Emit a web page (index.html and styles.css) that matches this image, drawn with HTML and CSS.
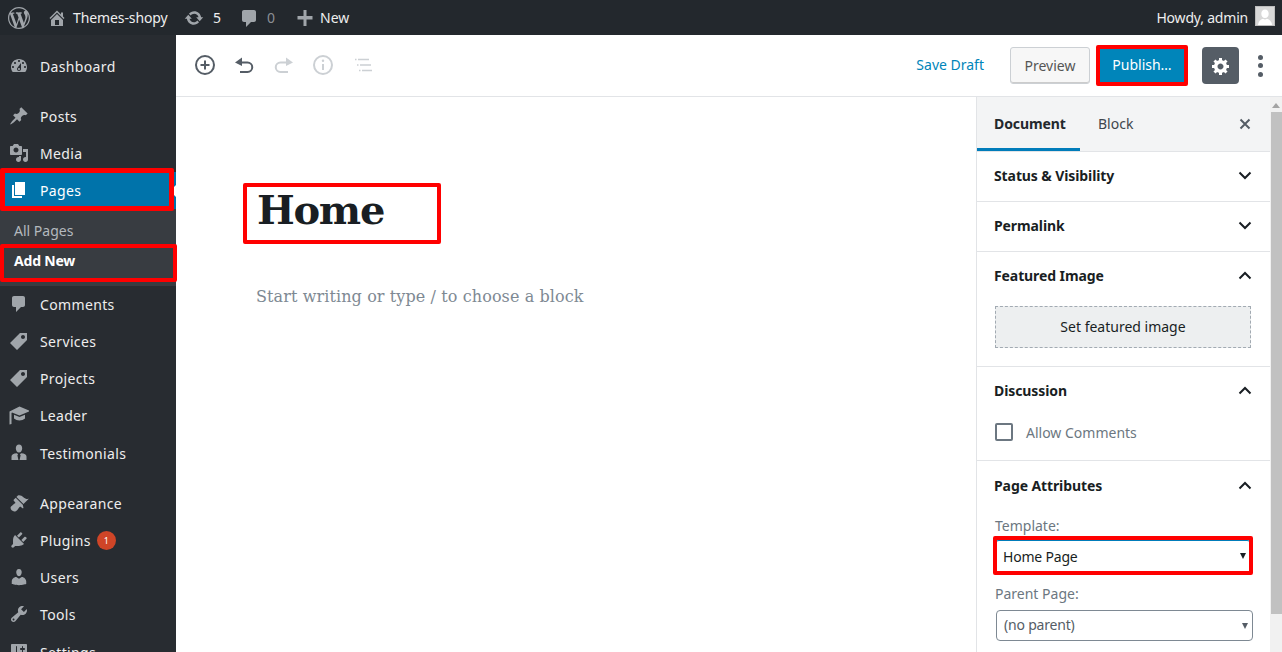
FILE: index.html
```html
<!DOCTYPE html>
<html lang="en">
<head>
<meta charset="utf-8">
<title>Add New Page</title>
<link rel="stylesheet" href="styles.css">
</head>
<body>
<header class="topbar">
  <svg class="tb-logo" viewBox="0 0 20 20"><path d="M20 10c0-5.51-4.49-10-10-10C4.48 0 0 4.49 0 10c0 5.52 4.48 10 10 10 5.51 0 10-4.48 10-10zM7.78 15.37L4.37 6.22c.55-.02 1.17-.08 1.17-.08.5-.06.44-1.13-.06-1.11 0 0-1.45.11-2.37.11-.18 0-.37 0-.58-.01C4.12 2.69 6.87 1.11 10 1.11c2.33 0 4.45.87 6.05 2.34-.68-.11-1.65.39-1.65 1.58 0 .74.45 1.36.9 2.1.35.61.55 1.36.55 2.46 0 1.49-1.4 5-1.4 5l-3.03-8.37c.54-.02.82-.17.82-.17.5-.05.44-1.25-.06-1.22 0 0-1.44.12-2.38.12-.87 0-2.33-.12-2.33-.12-.5-.03-.56 1.2-.06 1.22l.92.08 1.26 3.41zM17.41 10c.24-.64.74-1.87.43-4.25.7 1.29 1.05 2.71 1.05 4.25 0 3.29-1.73 6.24-4.4 7.78.97-2.59 1.94-5.2 2.92-7.78zM6.1 18.09C3.12 16.65 1.11 13.53 1.11 10c0-1.3.23-2.48.72-3.59C3.25 10.3 4.67 14.2 6.1 18.09zm4.03-6.63l2.58 6.98c-.86.29-1.76.45-2.71.45-.79 0-1.57-.11-2.29-.33.81-2.38 1.62-4.74 2.42-7.1z"/></svg>
  <svg class="tb-icon tb-home" viewBox="0 0 20 20"><path d="M16 8.5l1.53 1.53-1.06 1.06L10 4.62l-6.47 6.47-1.06-1.06L10 2.5l4 4v-2h2v4zm-6-2.46l6 5.99V18H4v-5.97zM12 17v-5H8v5h4z"/></svg>
  <span class="tb-site">Themes-shopy</span>
  <svg class="tb-icon tb-update" viewBox="0 0 20 20"><path d="M10.2 3.28c3.53 0 6.43 2.61 6.92 6h2.08l-3.5 4-3.5-4h2.32c-.45-1.97-2.21-3.45-4.32-3.45-1.45 0-2.73.71-3.54 1.78L4.95 5.66C6.23 4.2 8.11 3.28 10.2 3.28zm-.4 13.44c-3.52 0-6.43-2.61-6.92-6H.8l3.5-4c1.17 1.33 2.33 2.67 3.5 4H5.48c.45 1.97 2.21 3.45 4.32 3.45 1.45 0 2.73-.71 3.54-1.78l1.71 1.95c-1.28 1.46-3.15 2.38-5.25 2.38z"/></svg>
  <span class="tb-count">5</span>
  <svg class="tb-icon tb-comment" viewBox="0 0 20 20"><path d="M5 2h10c1.1 0 2 .9 2 2v8c0 1.1-.9 2-2 2h-3l-5 5v-5H5c-1.1 0-2-.9-2-2V4c0-1.1.9-2 2-2z"/></svg>
  <span class="tb-count tb-zero">0</span>
  <svg class="tb-icon tb-plus" viewBox="0 0 20 20"><path d="M17.5 8v3.500h-6V18h-3v-6.500h-6V8h6V2h3v6z"/></svg>
  <span class="tb-new">New</span>
  <span class="tb-howdy">Howdy, admin</span>
  <svg class="tb-avatar" viewBox="0 0 20 20"><rect width="20" height="20" fill="#bdbdbd"/><rect x="1" y="1" width="18" height="18" fill="#d8d8d8"/><path fill="#fff" d="M10 3.500c2.300 0 3.700 1.900 3.700 4.200S12.300 12 10 12 6.300 10 6.300 7.700 7.700 3.500 10 3.500zM3 19c.3-3.500 2.500-5.800 5-6.300.6.500 1.300.8 2 .8s1.400-.3 2-.8c2.500.5 4.700 2.800 5 6.300z"/></svg>
</header>

<div class="shell">
  <nav class="sidebar">
    <a class="item first"><svg viewBox="0 0 20 20"><path d="M3.760 16h12.480c1.100-1.370 1.760-3.110 1.760-5 0-4.420-3.580-8-8-8s-8 3.580-8 8c0 1.890.66 3.630 1.760 5zM10 4c.55 0 1 .45 1 1s-.45 1-1 1-1-.45-1-1 .45-1 1-1zM6 6c.55 0 1 .45 1 1s-.45 1-1 1-1-.45-1-1 .45-1 1-1zm8 0c.55 0 1 .45 1 1s-.45 1-1 1-1-.45-1-1 .45-1 1-1zm-5.370 5.550L12 7v6c0 1.100-.9 2-2 2s-2-.9-2-2c0-.57.24-1.080.63-1.450zM4 10c.55 0 1 .45 1 1s-.45 1-1 1-1-.45-1-1 .45-1 1-1zm12 0c.55 0 1 .45 1 1s-.45 1-1 1-1-.45-1-1 .45-1 1-1zm-5 3c0-.55-.45-1-1-1s-1 .45-1 1 .45 1 1 1 1-.45 1-1z"/></svg>Dashboard</a>
    <a class="item sep"><svg viewBox="0 0 20 20"><path d="M10.440 3.020l1.820-1.820 6.360 6.350-1.830 1.820c-1.050-.68-2.480-.57-3.410.36l-.75.75c-.92.93-1.040 2.350-.35 3.410l-1.830 1.820-2.410-2.410-2.800 2.790c-.42.42-3.380 2.710-3.800 2.290s1.860-3.390 2.280-3.810l2.790-2.790L4.100 9.360l1.830-1.820c1.050.69 2.480.57 3.400-.36l.75-.75c.93-.92 1.050-2.350.36-3.410z"/></svg>Posts</a>
    <a class="item"><svg viewBox="0 0 20 20"><path d="M13 11V4c0-.55-.45-1-1-1h-1.670L9 1H5L3.670 3H2c-.55 0-1 .45-1 1v7c0 .55.45 1 1 1h10c.55 0 1-.45 1-1zM7 4.500c1.380 0 2.500 1.120 2.500 2.500S8.380 9.500 7 9.500 4.500 8.380 4.500 7 5.620 4.500 7 4.500zM14 6h5v10.500c0 1.380-1.120 2.500-2.500 2.500S14 17.880 14 16.500s1.120-2.500 2.500-2.500c.17 0 .34.02.5.05V9h-3V6zm-4 8.050V13h2v3.500c0 1.380-1.120 2.500-2.500 2.500S7 17.880 7 16.500 8.120 14 9.500 14c.17 0 .34.02.5.05z"/></svg>Media</a>
    <a class="item active mark-pages"><svg viewBox="0 0 20 20"><path d="M6 15V2h10v13H6zm-1 1h8v2H3V5h2v11z"/></svg>Pages</a>
    <div class="submenu">
      <a class="sub">All Pages</a>
      <a class="sub current mark-addnew">Add New</a>
    </div>
    <a class="item"><svg viewBox="0 0 20 20"><path d="M5 2h9c1.100 0 2 .9 2 2v7c0 1.100-.9 2-2 2h-2l-5 5v-5H5c-1.100 0-2-.9-2-2V4c0-1.100.9-2 2-2z"/></svg>Comments</a>
    <a class="item"><svg viewBox="0 0 20 20"><path d="M11 2h7v7L8 19l-7-7zm3 6c1.100 0 2-.9 2-2s-.9-2-2-2-2 .9-2 2 .9 2 2 2z"/></svg>Services</a>
    <a class="item"><svg viewBox="0 0 20 20"><path d="M11 2h7v7L8 19l-7-7zm3 6c1.100 0 2-.9 2-2s-.9-2-2-2-2 .9-2 2 .9 2 2 2z"/></svg>Projects</a>
    <a class="item"><svg viewBox="0 0 20 20"><path d="M10.500 1.500L21 6l-10.500 4.500L3 7.500l-.5.5v11l-2 .5V6.500z"/><path d="M5 9.800l5.500 2.200 5.500-2.200v3.700c-1.500 1.200-3.500 2-5.500 2s-4-.8-5.500-2z"/></svg>Leader</a>
    <a class="item"><svg viewBox="0 0 20 20"><path d="M10 1.500c1.900 0 3.200 1.600 3.200 3.700S11.900 9.500 10 9.500 6.800 7.300 6.800 5.200 8.100 1.500 10 1.500zM7.800 10.200l1.300 1-.7 1 1 4.800h-6.900v-3.500c0-2 2-3.100 5.300-3.300zm4.400 0c3.300.2 5.300 1.300 5.300 3.300V17h-6.900l1-4.800-.7-1z"/></svg>Testimonials</a>
    <a class="item sep"><svg viewBox="0 0 20 20"><path d="M14.480 11.060L7.410 3.990l1.500-1.500c.5-.56 2.300-.47 3.510.32 1.210.8 1.430 1.280 2.910 2.100 1.180.64 2.450 1.260 4.450.85zm-.71.71L6.700 4.700 4.930 6.470c-.39.39-.39 1.020 0 1.410l1.060 1.060c.39.39.39 1.030 0 1.420-.6.6-1.430 1.110-2.210 1.690-.35.26-.7.53-1.010.84C1.430 13.230.91 15.500 2.680 17.300c1.780 1.770 4.060 1.240 5.400-.09.3-.32.57-.66.84-1.010.58-.78 1.090-1.610 1.690-2.210.39-.39 1.020-.39 1.410 0l1.060 1.060c.39.39 1.020.39 1.410 0z"/></svg>Appearance</a>
    <a class="item"><svg viewBox="0 0 20 20"><path d="M13.110 4.360L9.870 7.600 8 5.730l3.240-3.240c.35-.34 1.050-.2 1.560.32.52.51.66 1.210.31 1.550zm-8 1.770l.91-1.120 9.010 9.010-1.190.84c-.71.71-2.630 1.160-3.820 1.160H6.140L4.900 17.260c-.59.59-1.540.59-2.120 0-.59-.58-.59-1.530 0-2.120l1.240-1.240v-3.880c0-1.130.4-3.190 1.090-3.890zm7.260 3.970l3.240-3.240c.34-.35 1.040-.21 1.550.31.52.51.66 1.210.31 1.550l-3.240 3.250z"/></svg>Plugins<span class="badge">1</span></a>
    <a class="item"><svg viewBox="0 0 20 20"><path d="M10 9.250c-2.270 0-2.730-3.440-2.730-3.440C7 4.020 7.820 2 9.970 2c2.160 0 2.980 2.020 2.710 3.810 0 0-.41 3.440-2.680 3.440zm0 2.570L12.720 10c2.390 0 4.520 2.330 4.520 4.530v2.490s-3.650 1.130-7.240 1.130c-3.650 0-7.240-1.130-7.240-1.130v-2.490c0-2.250 1.940-4.480 4.470-4.480z"/></svg>Users</a>
    <a class="item"><svg viewBox="0 0 20 20"><path d="M16.680 9.770c-1.340 1.340-3.300 1.670-4.950.99l-5.410 6.520c-.99.99-2.590.99-3.580 0s-.99-2.590 0-3.570l6.520-5.420c-.68-1.650-.35-3.610.99-4.950 1.280-1.280 3.120-1.620 4.720-1.060l-2.890 2.890 2.820 2.820 2.860-2.870c.53 1.580.18 3.390-1.080 4.650zM3.810 16.210c.4.39 1.040.39 1.430 0 .4-.4.4-1.040 0-1.430-.39-.4-1.030-.4-1.430 0-.39.39-.39 1.030 0 1.430z"/></svg>Tools</a>
    <a class="item"><svg viewBox="0 0 20 20"><path d="M18 16V4c0-.55-.45-1-1-1H3c-.55 0-1 .45-1 1v12c0 .55.45 1 1 1h14c.55 0 1-.45 1-1zM8 11h1c.55 0 1 .45 1 1s-.45 1-1 1H8v1.500c0 .28-.22.5-.5.5s-.5-.22-.5-.5V13H6c-.55 0-1-.45-1-1s.45-1 1-1h1V5.500c0-.28.22-.5.5-.5s.5.22.5.5V11zm5-2h-1c-.55 0-1-.45-1-1s.45-1 1-1h1V5.500c0-.28.22-.5.5-.5s.5.22.5.5V7h1c.55 0 1 .45 1 1s-.45 1-1 1h-1v5.500c0 .28-.22.5-.5.5s-.5-.22-.5-.5V9z"/></svg>Settings</a>
  </nav>

  <div class="content">
    <div class="toolbar">
      <div class="tools">
        <span class="tool"><svg viewBox="0 0 24 24"><circle cx="12" cy="12" r="9" class="line"/><path d="M12 7.500v9M7.500 12h9" class="line"/></svg></span>
        <span class="tool"><svg viewBox="0 0 24 24"><path d="M10 4.500L3 9.500l7 3.500z" class="fill"/><path d="M9 9.500h6.500a4.750 4.750 0 0 1 0 9.500H8" class="line"/></svg></span>
        <span class="tool off"><svg viewBox="0 0 24 24"><path d="M14 4.500l7 5-7 3.500z" class="fill"/><path d="M15 9.500H8.500a4.750 4.750 0 0 0 0 9.500H16" class="line"/></svg></span>
        <span class="tool off"><svg viewBox="0 0 24 24"><circle cx="12" cy="12" r="9" class="line"/><path d="M12 11v6" class="line"/><circle cx="12" cy="7.800" r="1.200" class="fill"/></svg></span>
        <span class="tool off"><svg viewBox="0 0 24 24"><path d="M4 6.500h1.500M7 6.500h11M6 12h1.500M9 12h11M8 17.500h1.500M11 17.500h10" class="thin"/></svg></span>
      </div>
      <div class="actions">
        <span class="save">Save Draft</span>
        <span class="btn-preview">Preview</span>
        <span class="btn-publish mark-publish">Publish…</span>
        <span class="btn-gear"><svg viewBox="0 0 20 20"><path d="M18 12h-2.180c-.17.7-.44 1.350-.81 1.930l1.540 1.540-2.100 2.100-1.540-1.540c-.58.36-1.230.63-1.910.79V19H8v-2.180c-.68-.16-1.330-.43-1.910-.79l-1.540 1.540-2.120-2.120 1.540-1.540c-.36-.58-.63-1.230-.79-1.910H1V9.030h2.170c.16-.7.44-1.350.8-1.940L2.430 5.550l2.100-2.100 1.540 1.540c.58-.37 1.240-.64 1.930-.81V2h3v2.180c.68.16 1.330.43 1.910.79l1.540-1.540 2.120 2.120-1.540 1.540c.36.59.64 1.240.8 1.940H18V12zm-8.500 1.500c1.660 0 3-1.340 3-3s-1.340-3-3-3-3 1.340-3 3 1.340 3 3 3z"/></svg></span>
        <span class="more"><i></i><i></i><i></i></span>
      </div>
    </div>

    <div class="workspace">
      <main class="editor">
        <h1 class="title mark-title">Home</h1>
        <p class="placeholder">Start writing or type / to choose a block</p>
      </main>

      <aside class="panel">
        <div class="tabs">
          <span class="tab on">Document</span>
          <span class="tab">Block</span>
          <svg class="close" viewBox="0 0 14 14"><path d="M2.500 2.500l9 9M11.500 2.500l-9 9"/></svg>
        </div>
        <section class="sec">
          <div class="head"><span>Status &amp; Visibility</span><svg class="chev" viewBox="0 0 14 9"><path d="M1.500 1.500L7 7l5.500-5.500"/></svg></div>
        </section>
        <section class="sec">
          <div class="head"><span>Permalink</span><svg class="chev" viewBox="0 0 14 9"><path d="M1.500 1.500L7 7l5.500-5.500"/></svg></div>
        </section>
        <section class="sec">
          <div class="head"><span>Featured Image</span><svg class="chev" viewBox="0 0 14 9"><path d="M1.500 7.500L7 2l5.500 5.500"/></svg></div>
          <div class="body-feature"><div class="set-image">Set featured image</div></div>
        </section>
        <section class="sec">
          <div class="head"><span>Discussion</span><svg class="chev" viewBox="0 0 14 9"><path d="M1.500 7.500L7 2l5.500 5.500"/></svg></div>
          <div class="body-discuss"><span class="check"></span><span>Allow Comments</span></div>
        </section>
        <section class="sec last">
          <div class="head"><span>Page Attributes</span><svg class="chev" viewBox="0 0 14 9"><path d="M1.500 7.500L7 2l5.500 5.500"/></svg></div>
          <div class="body-attrs">
            <label class="lbl">Template:</label>
            <div class="selwrap dark mark-template"><select class="sel focus"><option>Home Page</option></select></div>
            <label class="lbl lbl2">Parent Page:</label>
            <div class="selwrap parent"><select class="sel"><option>(no parent)</option></select></div>
          </div>
        </section>
      </aside>

      <div class="scrollbar"><span class="arrow"></span><span class="thumb"></span></div>
    </div>
  </div>
</div>
</body>
</html>
```
FILE: styles.css
```css
*, *::before, *::after { box-sizing: border-box; }
html, body { margin: 0; height: 100%; overflow: hidden; }
body {
  width: 1282px; height: 652px;
  font-family: "Noto Sans", "Open Sans", sans-serif;
  font-size: 14px; color: #23282d; background: #fff;
  display: flex; flex-direction: column;
}

/* top bar */
.topbar { height: 35px; flex: none; background: #23282d; color: #eee; display: flex; align-items: center; }
.topbar svg { flex: none; fill: #a0a5aa; }
.tb-logo { width: 22px; height: 22px; margin-left: 8px; }
.tb-icon { width: 20px; height: 20px; }
.tb-home { margin-left: 17px; }
.tb-site { margin-left: 6px; width: 94px; white-space: nowrap; letter-spacing: -.1px; }
.tb-update { margin-left: 17px; }
.tb-count { margin-left: 9px; width: 8px; }
.tb-comment { margin-left: 18px; }
.tb-zero { margin-left: 8px; color: #8a8f94; }
.tb-plus { margin-left: 20px; }
.tb-new { margin-left: 5px; }
.tb-howdy { margin-left: auto; margin-right: 7px; letter-spacing: -.2px; }
.tb-avatar { width: 20px; height: 20px; margin-right: 7px; margin-top: -3px; }

.shell { flex: 1; display: flex; min-height: 0; }

/* sidebar */
.sidebar { width: 176px; flex: none; background: #282c31; color: #eee; }
.item { position: relative; display: flex; align-items: center; height: 37.2px; padding-left: 40px; white-space: nowrap; letter-spacing: .35px; }
.item svg { position: absolute; left: 9px; top: 8px; width: 20px; height: 20px; fill: #a0a5aa; }
.item.first { margin-top: 12.5px; }
.item.sep { margin-top: 13px; }
.item.active { background: #0073aa; color: #fff; }
.item.active svg { fill: #fff; }
.item.active::before {
  content: ""; position: absolute; right: 0; top: 13px;
  border: 6px solid transparent; border-right-color: #fff; border-left-width: 0;
}
.submenu { background: #383c41; padding: 6px 0 10.5px; }
.sub { display: flex; align-items: center; height: 30px; padding-left: 14px; color: #b4b9be; position: relative; }
.sub.current { color: #fff; font-weight: 700; letter-spacing: -.2px; }
.badge {
  width: 19px; height: 19px; margin-left: 6px; border-radius: 50%; background: #cf4527; color: #fff;
  font-size: 9px; line-height: 19px; text-align: center; letter-spacing: 0;
}

/* red annotation boxes, laid over the elements they mark */
.mark-pages::after, .mark-addnew::after, .mark-publish::after, .mark-title::after, .mark-template::after {
  content: ""; position: absolute; border: 4px solid #f00; border-radius: 2px; pointer-events: none;
}
.mark-pages::after { left: 0; top: -4px; width: 174px; height: 43px; border-width: 5px; }
.mark-addnew::after { left: 0; top: -1px; width: 177px; height: 38px; }
.mark-publish { position: relative; }
.mark-publish::after { left: -4px; top: -3px; width: 92px; height: 41px; }
.mark-title { position: relative; }
.mark-title::after { left: -14px; top: 0; width: 198px; height: 61px; }
.mark-template { position: relative; }
.mark-template::after { left: -2px; top: -4px; width: 260px; height: 39px; }

/* content */
.content { flex: 1; min-width: 0; display: flex; flex-direction: column; }
.toolbar { height: 62px; flex: none; border-bottom: 1px solid #e2e4e7; display: flex; align-items: center; justify-content: space-between; padding-left: 9px; }
.tools { display: flex; }
.tool { width: 39.5px; height: 40px; display: flex; align-items: center; justify-content: center; margin-top: -2px; }
.tool svg { width: 24px; height: 24px; color: #555d66; }
.tool.off svg { color: #ccd0d4; }
.line { fill: none; stroke: currentColor; stroke-width: 2; }
.fill { fill: currentColor; }
.thin { fill: none; stroke: currentColor; stroke-width: 1.500; }

.actions { display: flex; align-items: center; padding-right: 19px; }
.save { color: #0085ba; margin-right: 26px; margin-bottom: 2px; }
.btn-preview {
  width: 80px; height: 37px; border: 1px solid #ccd0d4; border-radius: 3px; background: #f7f7f7;
  color: #555; display: flex; align-items: center; justify-content: center; box-shadow: inset 0 -1px 0 #ccc;
}
.btn-publish {
  width: 84px; height: 34px; margin-left: 10px; margin-bottom: 2px; background: #0085ba; color: #fff;
  display: flex; align-items: center; justify-content: center;
}
.btn-gear { width: 37px; height: 37px; margin-left: 18px; background: #555d66; border-radius: 4px; display: flex; align-items: center; justify-content: center; }
.btn-gear svg { width: 20px; height: 20px; fill: #fff; }
.more { margin-left: 19px; width: 5px; display: flex; flex-direction: column; gap: 3.500px; }
.more i { width: 5px; height: 5px; border-radius: 50%; background: #555d66; }

.workspace { flex: 1; min-height: 0; display: flex; }

/* editor */
.editor { flex: 1; min-width: 0; padding: 86px 0 0 80px; }
.title {
  margin: 0 0 0 1px; width: 185px; height: 61px; padding-top: 4px;
  font-family: "DejaVu Serif", serif; font-weight: 700; font-size: 40px; line-height: 46px; letter-spacing: -1.3px; color: #191e23;
}
.placeholder { margin: 41px 0 0; font-family: "DejaVu Serif", serif; font-size: 16px; line-height: 24px; color: #7e8993; letter-spacing: .1px; white-space: nowrap; }

/* panel */
.panel { width: 294px; flex: none; border-left: 1px solid #e2e4e7; overflow: hidden; }
.tabs { height: 55px; background: #f3f4f5; border-bottom: 1px solid #e2e4e7; display: flex; align-items: stretch; position: relative; }
.tab { display: flex; align-items: center; padding: 0 18px 1px; font-size: 14px; color: #40464d; height: 54px; }
.tab.on { width: 103px; padding-left: 17px; color: #23282d; font-weight: 700; box-shadow: inset 0 -3px 0 #007cba; white-space: nowrap; letter-spacing: -.1px; }
.close { position: absolute; left: 261px; top: 20px; width: 14px; height: 14px; fill: none; stroke: #555d66; stroke-width: 2; }
.sec { border-bottom: 1px solid #e2e4e7; }
.sec.last { border-bottom: 0; }
.head { height: 49px; display: flex; align-items: center; justify-content: space-between; padding: 0 18px 2px 17px; font-weight: 700; color: #191e23; letter-spacing: -.1px; }
.sec.last .head { padding-bottom: 0; }
.chev { width: 14px; height: 9px; fill: none; stroke: #191e23; stroke-width: 2; }
.body-feature { padding: 5px 19px 18px 18px; }
.set-image { height: 42px; padding-bottom: 1px; border: 1px dashed #a2aab2; background: #edeff0; color: #191e23; display: flex; align-items: center; justify-content: center; }
.body-discuss { display: flex; align-items: center; height: 44px; padding: 0 0 12px 18px; color: #6c7781; }
.check { width: 18px; height: 18px; border: 2px solid #6c7781; border-radius: 2px; margin-right: 13px; background: #fff; }
.body-attrs { padding: 0 0 0 18px; }
.lbl { display: block; height: 20px; line-height: 20px; margin: 6px 0 4px; color: #6c7781; }
.lbl2 { margin: 13px 0 6px; }
.selwrap { position: relative; width: 256px; }
.selwrap::before {
  content: ""; position: absolute; right: 5px; top: 13px; pointer-events: none;
  border: 3.500px solid transparent; border-bottom-width: 0; border-top: 6px solid #555d66;
}
.selwrap.dark::before { border-top-color: #191e23; }
.selwrap.parent { width: 257px; margin-left: 1px; }
.sel {
  display: block; width: 100%; height: 31px; padding: 0 7px 2px; appearance: none; -webkit-appearance: none;
  font-family: "Noto Sans", sans-serif; font-size: 14px; letter-spacing: -.2px; color: #555d66;
  background: #fff; border: 1px solid #7e8993; border-radius: 4px;
}
.sel.focus { padding: 2px 7px 0; border-color: #007cba; border-bottom-color: #fff; color: #191e23; }

/* scrollbar */
.scrollbar { width: 12px; flex: none; background: #f1f1f1; position: relative; padding-left: 1px; }
.arrow { position: absolute; left: 2px; top: 6px; border: 4px solid transparent; border-top-width: 0; border-bottom: 5px solid #a3a3a3; }
.thumb { display: block; margin-top: 15px; height: 502px; background: #c1c1c1; }
```
